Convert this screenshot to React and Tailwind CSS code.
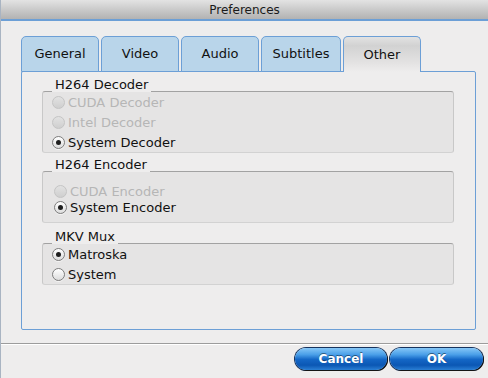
const font = "font-['DejaVu_Sans','Liberation_Sans',sans-serif]"

function Radio({ label, checked = false, disabled = false, height = 'h-[20px]' }) {
  return (
    <div className={`flex items-center gap-[3px] ${height}`}>
      <span
        className={`w-[13px] h-[13px] rounded-full border flex items-center justify-center shrink-0 ${
          disabled
            ? 'border-[#c4c4c4] bg-linear-to-b from-[#e2e2e2] to-[#cfcfcf]'
            : 'border-[#7d7d7d] bg-linear-to-b from-[#ffffff] to-[#dcdcdc] shadow-[0_1px_0_rgba(255,255,255,0.6)]'
        }`}
      >
        {checked && <span className="w-[5px] h-[5px] rounded-full bg-[#1e1e1e]" />}
      </span>
      <span className={`text-[13px] leading-none ${disabled ? 'text-[#b6b6b6]' : 'text-[#111]'}`}>{label}</span>
    </div>
  )
}

function Group({ title, className = '', boxClass = '', children }) {
  return (
    <div className={`w-[412px] ml-[20px] ${className}`}>
      <div className="relative z-10 ml-[10px] w-fit px-[3px] h-[14px] leading-[14px] text-[13px] text-[#111] bg-[#eeeded]">
        {title}
      </div>
      <div className={`-mt-px rounded-[3px] border border-[#c8c8c8] border-t-[#a2a2a2] border-b-[#d2d2d2] bg-[#e5e4e4] ${boxClass}`}>
        {children}
      </div>
    </div>
  )
}

const tabs = [
  { name: 'General', w: 'w-[78px]' },
  { name: 'Video', w: 'w-[78px]' },
  { name: 'Audio', w: 'w-[78px]' },
  { name: 'Subtitles', w: 'w-[80px]' },
  { name: 'Other', w: 'w-[78px]', active: true },
]

function Button({ children, w }) {
  return (
    <button
      className={`${w} h-[22px] rounded-full text-white font-bold text-[12px] leading-none bg-[linear-gradient(to_bottom,#86c7f7_0%,#4a9fe8_30%,#1467c6_52%,#0b57b4_78%,#2a7fd4_100%)] shadow-[1px_1px_0_#151515,0_0_0_1px_#16335e] [text-shadow:0_-1px_0_rgba(0,0,0,0.45)]`}
    >
      {children}
    </button>
  )
}

export default function App() {
  return (
    <div className={`w-[488px] h-[378px] bg-[#eeeded] flex flex-col border-l border-[#a9b4c2] ${font}`}>
      <div className="h-[19px] shrink-0 bg-linear-to-b from-[#e3e3e3] to-[#b2b2b2] flex items-center justify-center text-[12px] text-[#1a1a1a]">
        Preferences
      </div>
      <div className="h-[2px] shrink-0 bg-[#6c9fd6]" />

      <div className="pl-[20px] pt-[15px]">
        <div className="relative z-10 flex gap-[2px] -mb-px">
          {tabs.map((t) => (
            <div
              key={t.name}
              className={`${t.w} h-[36px] rounded-t-[5px] border border-[#6c9fd6] flex items-center justify-center text-[13px] text-[#111] ${
                t.active
                  ? 'border-b-0 bg-[linear-gradient(to_bottom,#e2e2e2_0%,#d2d2d2_25%,#e2e1e1_70%,#eeeded_100%)]'
                  : 'bg-[#b9d5ea]'
              }`}
            >
              {t.name}
            </div>
          ))}
        </div>

        <div className="w-[455px] h-[259px] border border-[#6c9fd6] rounded-[2px] pt-[6px]">
          <Group title="H264 Decoder" boxClass="pl-[9px]">
            <Radio label="CUDA Decoder" disabled />
            <Radio label="Intel Decoder" disabled />
            <Radio label="System Decoder" checked />
          </Group>

          <Group title="H264 Encoder" className="mt-[5px]" boxClass="pl-[11px] pt-[11px] pb-[7px]">
            <Radio label="CUDA Encoder" disabled height="h-[16px]" />
            <Radio label="System Encoder" checked height="h-[16px]" />
          </Group>

          <Group title="MKV Mux" className="mt-[7px]" boxClass="pl-[9px]">
            <Radio label="Matroska" checked />
            <Radio label="System" />
          </Group>
        </div>
      </div>

      <div className="mt-[13px] border-t border-[#9c9c9c] border-b border-b-white" />

      <div className="flex justify-end gap-[3px] pr-[5px] pt-[3px]">
        <Button w="w-[92px]">Cancel</Button>
        <Button w="w-[93px]">OK</Button>
      </div>
    </div>
  )
}
